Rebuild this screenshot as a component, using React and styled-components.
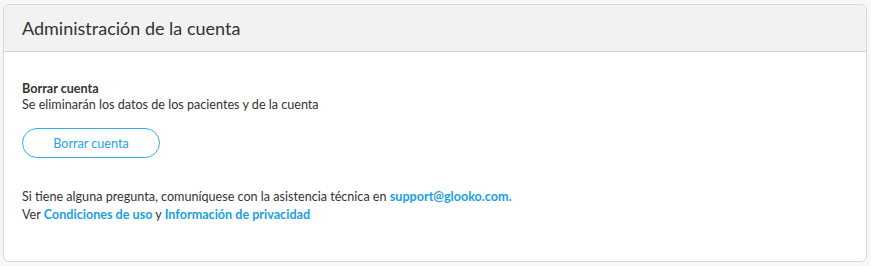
import styled, { createGlobalStyle } from 'styled-components';

const GlobalStyle = createGlobalStyle`
  html, body {
    margin: 0;
    background: #f7f7f7;
  }
  body {
    font-family: Lato, "Liberation Sans", sans-serif;
    color: #333;
  }
`;

const Page = styled.div`
  padding: 4px 4px 4px 3px;
`;

const Card = styled.section`
  box-sizing: border-box;
  width: 864px;
  height: 258px;
  background: #fff;
  border: 1px solid #d6d6d6;
  border-radius: 6px;
  overflow: hidden;
`;

const Header = styled.header`
  box-sizing: border-box;
  height: 47px;
  display: flex;
  align-items: center;
  padding: 0 18px;
  background: #f2f2f2;
  border-bottom: 1px solid #d6d6d6;
`;

const Title = styled.h2`
  margin: 0;
  font-size: 18px;
  font-weight: 400;
  color: #333;
`;

const Body = styled.div`
  padding: 29px 18px 0;
  font-size: 12.6px;
`;

const SectionTitle = styled.div`
  font-weight: 700;
  line-height: 16px;
`;

const Text = styled.p`
  margin: 0;
  line-height: ${(p) => p.lineHeight || '16px'};
`;

const OutlineButton = styled.button`
  margin-top: 15px;
  width: 138px;
  height: 30px;
  border: 1px solid #31aeea;
  border-radius: 15px;
  background: #fff;
  color: #1ea3e4;
  font-family: inherit;
  font-size: 12.6px;
  cursor: pointer;
`;

const Footer = styled.div`
  margin-top: 30px;
`;

const Link = styled.a`
  color: #1a9fe2;
  font-weight: 700;
  text-decoration: none;
`;

export default function App() {
  return (
    <>
      <GlobalStyle />
      <Page>
        <Card>
          <Header>
            <Title>Administración de la cuenta</Title>
          </Header>
          <Body>
            <SectionTitle>Borrar cuenta</SectionTitle>
            <Text>Se eliminarán los datos de los pacientes y de la cuenta</Text>
            <OutlineButton>Borrar cuenta</OutlineButton>
            <Footer>
              <Text lineHeight="18px">
                Si tiene alguna pregunta, comuníquese con la asistencia técnica en{' '}
                <Link href="#">support@glooko.com.</Link>
              </Text>
              <Text lineHeight="18px">
                Ver <Link href="#">Condiciones de uso</Link> y{' '}
                <Link href="#">Información de privacidad</Link>
              </Text>
            </Footer>
          </Body>
        </Card>
      </Page>
    </>
  );
}
